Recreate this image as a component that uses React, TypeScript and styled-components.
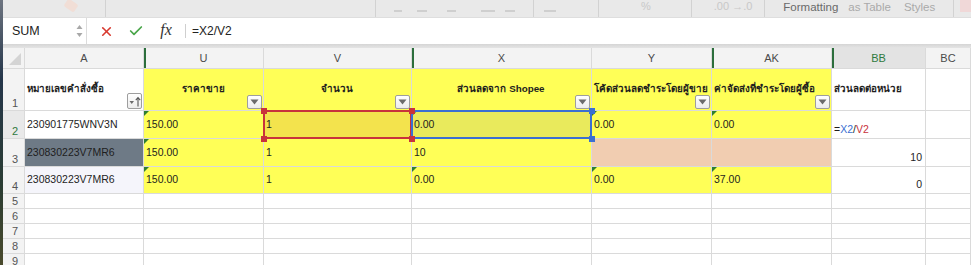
import React from 'react';
import styled, { createGlobalStyle, css } from 'styled-components';
import { X, Check } from 'lucide-react';

const YELLOW = '#ffff57';
const PEACH = '#f1cdb1';
const GREEN = '#2c6e3c';

type Corner = 'tl' | 'tr' | 'bl' | 'br';

type CellData = {
  text?: React.ReactNode;
  bg?: string;
  align?: 'left' | 'center' | 'right';
  bottom?: boolean;
  bold?: boolean;
  tri?: boolean;
  sel?: { color: string; corners: Corner[] };
  filter?: 'down' | 'sort';
};

const columns = [
  { name: 'A', mark: false },
  { name: 'U', mark: true },
  { name: 'V', mark: false },
  { name: 'X', mark: true },
  { name: 'Y', mark: false },
  { name: 'AK', mark: true },
  { name: 'BB', mark: true, active: true },
  { name: 'BC', mark: false },
];

const Formula = () => (
  <>
    =<Ref $c="#3b6fd2">X2</Ref>/<Ref $c="#c8323c">V2</Ref>
  </>
);

const rows: { n: number; active?: boolean; cells: CellData[] }[] = [
  {
    n: 1,
    cells: [
      { text: 'หมายเลขคำสั่งซื้อ', bold: true, filter: 'sort' },
      { text: 'ราคาขาย', bg: YELLOW, bold: true, align: 'center', filter: 'down' },
      { text: 'จำนวน', bg: YELLOW, bold: true, align: 'center', filter: 'down' },
      { text: 'ส่วนลดจาก Shopee', bg: YELLOW, bold: true, align: 'center', filter: 'down' },
      { text: 'โค้ดส่วนลดชำระโดยผู้ขาย', bg: YELLOW, bold: true, filter: 'down' },
      { text: 'ค่าจัดส่งที่ชำระโดยผู้ซื้อ', bg: YELLOW, bold: true, filter: 'down' },
      { text: 'ส่วนลดต่อหน่วย', bold: true },
      {},
    ],
  },
  {
    n: 2,
    active: true,
    cells: [
      { text: '230901775WNV3N' },
      { text: '150.00', bg: YELLOW, tri: true },
      { text: '1', bg: '#f3e34d', sel: { color: '#c8323c', corners: ['tl', 'bl', 'tr', 'br'] } },
      { text: '0.00', bg: '#e9ea5c', tri: true, sel: { color: '#3b6fd2', corners: ['tr', 'br'] } },
      { text: '0.00', bg: YELLOW, tri: true },
      { text: '0.00', bg: YELLOW, tri: true },
      { text: <Formula />, bottom: true },
      {},
    ],
  },
  {
    n: 3,
    cells: [
      { text: '230830223V7MR6', bg: '#6e7a86' },
      { text: '150.00', bg: YELLOW, tri: true },
      { text: '1', bg: YELLOW },
      { text: '10', bg: YELLOW },
      { bg: PEACH },
      { bg: PEACH },
      { text: '10', align: 'right', bottom: true },
      {},
    ],
  },
  {
    n: 4,
    cells: [
      { text: '230830223V7MR6', bg: '#f5f5fb' },
      { text: '150.00', bg: YELLOW, tri: true },
      { text: '1', bg: YELLOW },
      { text: '0.00', bg: YELLOW, tri: true },
      { text: '0.00', bg: YELLOW, tri: true },
      { text: '37.00', bg: YELLOW, tri: true },
      { text: '0', align: 'right', bottom: true },
      {},
    ],
  },
  ...[5, 6, 7, 8, 9].map((n) => ({ n, cells: Array.from({ length: 8 }, () => ({})) })),
];

const FilterIcon: React.FC<{ kind: 'down' | 'sort' }> = ({ kind }) =>
  kind === 'down' ? (
    <svg width="9" height="6" viewBox="0 0 9 6">
      <path d="M0.5 0.5 H8.5 L4.5 5.5 Z" fill="#6b6b6b" />
    </svg>
  ) : (
    <svg width="12" height="11" viewBox="0 0 12 11">
      <path d="M0.5 5 H5 L2.75 8 Z" fill="#6b6b6b" />
      <path d="M9 10.5 V2 M6.8 4.2 L9 1.5 L11.2 4.2" stroke="#555" strokeWidth="1.1" fill="none" />
    </svg>
  );

const App: React.FC = () => {
  return (
    <Screen>
      <GlobalStyle />
      <DeskEdge />
      <Window>
        <Ribbon>
          <Gap $w={62} />
          <Brush />
          <Gap $w={28} />
          <RibbonSep />
          <Gap $w={269} />
          <RibbonSep />
          <Gap $w={18} />
          <Dash $w={8} />
          <Gap $w={15} />
          <Dash $w={10} />
          <Gap $w={20} />
          <Dash $w={9} />
          <Gap $w={25} />
          <Dash $w={14} />
          <Gap $w={10} />
          <Dash $w={10} />
          <Gap $w={18} />
          <RibbonSep />
          <Gap $w={10} />
          <Dash $w={12} />
          <Gap $w={42} />
          <RibbonSep />
          <Gap $w={42} />
          <FaintText>%</FaintText>
          <Gap $w={40} />
          <RibbonSep />
          <Gap $w={22} />
          <FaintText>.00 →.0</FaintText>
          <Gap $w={12} />
          <RibbonSep />
          <Gap $w={18} />
          <RibbonLabel $strong>Formatting</RibbonLabel>
          <Gap $w={10} />
          <RibbonLabel>as Table</RibbonLabel>
          <Gap $w={13} />
          <RibbonLabel>Styles</RibbonLabel>
          <Gap $w={18} />
          <RibbonSep />
          <Gap $w={6} />
          <Pinkish />
        </Ribbon>

        <FormulaBar>
          <NameBox>
            <span>SUM</span>
            <Stepper>
              <svg width="7" height="14" viewBox="0 0 7 14">
                <path d="M0.5 5 L3.5 1 L6.5 5 Z M0.5 9 L3.5 13 L6.5 9 Z" fill="#a8a8a8" />
              </svg>
            </Stepper>
          </NameBox>
          <BarButton $w={26} $ml={6}>
            <X size={15} strokeWidth={2.6} color="#d8392f" />
          </BarButton>
          <BarButton $w={26} $ml={4}>
            <Check size={16} strokeWidth={2.6} color="#4aa64a" />
          </BarButton>
          <BarButton $w={26} $ml={4}>
            <Fx>fx</Fx>
          </BarButton>
          <BarSep />
          <FormulaText>=X2/V2</FormulaText>
        </FormulaBar>
        <Divider />

        <Sheet>
          <CornerCell>
            <svg width="12" height="12" viewBox="0 0 12 12">
              <path d="M12 0 V12 H0 Z" fill="#d4d4d4" />
            </svg>
          </CornerCell>
          {columns.map((c) => (
            <ColHeader key={c.name} $mark={c.mark} $active={c.active}>
              {c.name}
            </ColHeader>
          ))}

          {rows.map((r) => (
            <React.Fragment key={r.n}>
              <RowHeader $active={r.active}>{r.n}</RowHeader>
              {r.cells.map((cell, i) => (
                <Cell
                  key={i}
                  $bg={cell.bg}
                  $align={cell.align ?? 'left'}
                  $bottom={cell.bottom}
                  $bold={cell.bold}
                >
                  {cell.tri && <GreenTri />}
                  {cell.text !== undefined && <CellText>{cell.text}</CellText>}
                  {cell.filter && (
                    <FilterButton $tall={cell.filter === 'sort'}>
                      <FilterIcon kind={cell.filter} />
                    </FilterButton>
                  )}
                  {cell.sel && (
                    <>
                      <SelFrame $c={cell.sel.color} />
                      {cell.sel.corners.map((k) => (
                        <Handle key={k} $c={cell.sel!.color} $corner={k} />
                      ))}
                    </>
                  )}
                </Cell>
              ))}
            </React.Fragment>
          ))}
        </Sheet>
      </Window>
    </Screen>
  );
};

export default App;

const GlobalStyle = createGlobalStyle`
  html, body {
    margin: 0;
    padding: 0;
    background: #ffffff;
  }
  body {
    font-family: 'Liberation Sans', 'DejaVu Sans', 'Noto Sans', sans-serif;
    overflow: hidden;
  }
`;

const Screen = styled.div`
  display: flex;
  width: 971px;
  height: 265px;
  overflow: hidden;
`;

const DeskEdge = styled.div`
  width: 3px;
  flex: none;
  background: linear-gradient(180deg, #6d7480 0%, #25364a 30%, #2b3d33 70%, #4a4a2c 100%);
`;

const Window = styled.div`
  flex: 1;
  display: flex;
  flex-direction: column;
  min-width: 0;
`;

const Ribbon = styled.div`
  height: 17px;
  flex: none;
  display: flex;
  align-items: center;
  background: #e9e9e9;
  border-bottom: 1px solid #dedede;
  overflow: hidden;
`;

const Gap = styled.div<{ $w: number }>`
  width: ${(p) => p.$w}px;
  flex: none;
`;

const RibbonSep = styled.div`
  width: 1px;
  height: 17px;
  flex: none;
  background: #d2d2d2;
`;

const Dash = styled.div<{ $w: number }>`
  width: ${(p) => p.$w}px;
  height: 2px;
  flex: none;
  margin-top: 4px;
  background: #cfcfcf;
`;

const Brush = styled.div`
  width: 12px;
  height: 9px;
  margin-top: -6px;
  flex: none;
  border-radius: 2px;
  background: #f1ded6;
  transform: rotate(35deg);
`;

const Pinkish = styled.div`
  width: 12px;
  height: 12px;
  margin-top: -6px;
  flex: none;
  background: #f0d8d8;
`;

const FaintText = styled.span`
  flex: none;
  font-size: 11px;
  color: #c8c8c8;
  margin-top: -6px;
  white-space: nowrap;
`;

const RibbonLabel = styled.span<{ $strong?: boolean }>`
  flex: none;
  font-size: 11.5px;
  margin-top: -3px;
  white-space: nowrap;
  color: ${(p) => (p.$strong ? '#6a6a6a' : '#a9a9a9')};
`;

const FormulaBar = styled.div`
  height: 26px;
  flex: none;
  display: flex;
  align-items: center;
  background: #ffffff;
`;

const NameBox = styled.div`
  width: 84px;
  height: 100%;
  box-sizing: border-box;
  display: flex;
  align-items: center;
  justify-content: space-between;
  padding: 0 3px 0 9px;
  border-right: 1px solid #dcdcdc;
  font-size: 12.5px;
  color: #222;
`;

const Stepper = styled.div`
  display: flex;
  align-items: center;
`;

const BarButton = styled.div<{ $w: number; $ml: number }>`
  width: ${(p) => p.$w}px;
  margin-left: ${(p) => p.$ml}px;
  display: flex;
  align-items: center;
  justify-content: center;
`;

const Fx = styled.span`
  font-family: 'Liberation Serif', 'DejaVu Serif', serif;
  font-style: italic;
  font-size: 16px;
  color: #333;
  margin-top: -2px;
`;

const BarSep = styled.div`
  width: 1px;
  height: 14px;
  margin-left: 6px;
  background: #cfcfcf;
`;

const FormulaText = styled.span`
  margin-left: 6px;
  font-size: 12px;
  color: #222;
`;

const Divider = styled.div`
  height: 4px;
  flex: none;
  background: linear-gradient(180deg, #d5d5d5, #e4e4e4);
`;

const Sheet = styled.div`
  display: grid;
  grid-template-columns: 22px 119px 120px 148px 180px 120px 120px 94px 1fr;
  grid-template-rows: 21px 42px 28px 28px 27px repeat(5, 15px);
  background: #ffffff;
`;

const gridLine = css`
  box-sizing: border-box;
  border-right: 1px solid #dadada;
  border-bottom: 1px solid #dadada;
`;

const CornerCell = styled.div`
  ${gridLine};
  background: #f3f3f3;
  display: flex;
  align-items: flex-end;
  justify-content: flex-end;
  padding: 0 3px 3px 0;
`;

const ColHeader = styled.div<{ $mark?: boolean; $active?: boolean }>`
  ${gridLine};
  display: flex;
  align-items: center;
  justify-content: center;
  font-size: 11px;
  color: ${(p) => (p.$active ? '#2f7a40' : '#4a4a4a')};
  background: ${(p) => (p.$active ? '#e3e3e3' : '#f3f3f3')};
  box-shadow: ${(p) => (p.$mark ? `inset 2px 0 0 ${GREEN}` : 'none')};
`;

const RowHeader = styled.div<{ $active?: boolean }>`
  ${gridLine};
  display: flex;
  align-items: flex-end;
  padding: 0 0 0 9px;
  font-size: 11px;
  line-height: 14px;
  color: ${(p) => (p.$active ? '#2f7a40' : '#555555')};
  background: ${(p) => (p.$active ? '#e9e9e9' : '#f3f3f3')};
`;

const Cell = styled.div<{
  $bg?: string;
  $align: 'left' | 'center' | 'right';
  $bottom?: boolean;
  $bold?: boolean;
}>`
  ${gridLine};
  position: relative;
  display: flex;
  min-width: 0;
  padding: 0 3px 1px 2px;
  align-items: ${(p) => (p.$bottom ? 'flex-end' : 'center')};
  justify-content: ${(p) =>
    p.$align === 'center' ? 'center' : p.$align === 'right' ? 'flex-end' : 'flex-start'};
  background: ${(p) => p.$bg ?? '#ffffff'};
  font-size: ${(p) => (p.$bold ? '9.8px' : '10.5px')};
  font-weight: ${(p) => (p.$bold ? 700 : 400)};
  color: #1e1e1e;
`;

const CellText = styled.span`
  flex: none;
  white-space: nowrap;
  line-height: 14px;
  padding-bottom: 1px;
`;

const Ref = styled.span<{ $c: string }>`
  color: ${(p) => p.$c};
`;

const GreenTri = styled.span`
  position: absolute;
  top: 0;
  left: 0;
  width: 0;
  height: 0;
  border-top: 5px solid #2e7d32;
  border-right: 5px solid transparent;
`;

const FilterButton = styled.div<{ $tall?: boolean }>`
  position: absolute;
  right: 1px;
  bottom: 1px;
  width: 15px;
  height: ${(p) => (p.$tall ? 16 : 14)}px;
  box-sizing: border-box;
  display: flex;
  align-items: center;
  justify-content: center;
  background: linear-gradient(180deg, #ffffff, #ececec);
  border: 1px solid #9e9e9e;
  border-radius: 2px;
`;

const SelFrame = styled.div<{ $c: string }>`
  position: absolute;
  top: -1px;
  left: -1px;
  right: -1px;
  bottom: -1px;
  border: 2px solid ${(p) => p.$c};
  pointer-events: none;
  z-index: 2;
`;

const Handle = styled.div<{ $c: string; $corner: Corner }>`
  position: absolute;
  width: 6px;
  height: 6px;
  background: ${(p) => p.$c};
  z-index: 3;
  ${(p) => (p.$corner[0] === 't' ? 'top: -3px;' : 'bottom: -4px;')}
  ${(p) => (p.$corner[1] === 'l' ? 'left: -3px;' : 'right: -4px;')}
`;
